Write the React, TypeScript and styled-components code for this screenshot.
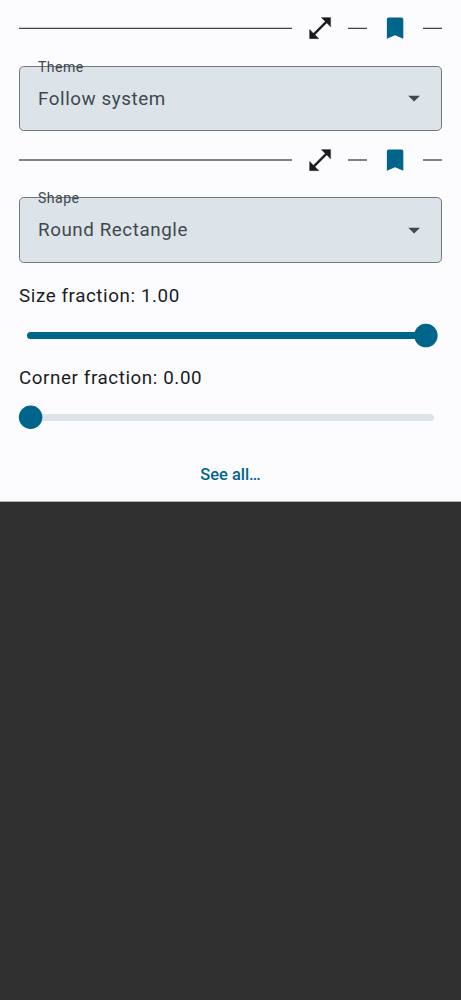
import React from "react";
import styled, { createGlobalStyle } from "styled-components";

const GlobalStyle = createGlobalStyle`
  *, *::before, *::after { box-sizing: border-box; }
  body { margin: 0; background: #303030; font-family: Roboto, sans-serif; }
`;

const Screen = styled.main`
  min-height: 1000px;
  background: #303030;
`;

const Panel = styled.section`
  height: 502px;
  padding: 0 19px;
  background: #fcfcff;
  border-bottom: 1px solid #b0b0b1;
  display: flex;
  flex-direction: column;
`;

const HeaderRow = styled.div<{ $height: number }>`
  display: flex;
  align-items: center;
  height: ${(p) => p.$height}px;
  flex: none;
`;

const Rule = styled.span<{ $width?: number; $even?: boolean }>`
  height: 2px;
  flex: ${(p) => (p.$width ? `0 0 ${p.$width}px` : "1")};
  background: ${(p) =>
    p.$even
      ? "#7e8489"
      : "linear-gradient(#c9ccd0 0 1px, #40484d 1px 2px)"};
`;

const IconButton = styled.button`
  flex: 0 0 56.4px;
  height: 56px;
  padding: 0;
  border: 0;
  background: none;
  display: flex;
  align-items: center;
  justify-content: center;
  color: #191c1e;
`;

const BookmarkButton = styled(IconButton)`
  color: #00658b;
`;

const Glyph = styled.svg`
  width: 28.2px;
  height: 28.2px;
  fill: currentColor;
  display: block;
`;

const Field = styled.div<{ $gap: number; $height: number }>`
  position: relative;
  flex: none;
  height: ${(p) => p.$height}px;
  margin-top: ${(p) => p.$gap}px;
  padding: 0 13px 0 18px;
  display: flex;
  align-items: center;
  justify-content: space-between;
  background: #dce3e9;
  border: 1px solid #71787d;
  border-radius: 4.7px;
  color: #40484d;
`;

const FieldLabel = styled.span`
  position: absolute;
  left: 18px;
  top: -9.5px;
  font-size: 14.08px;
  line-height: 18px;
  letter-spacing: 0.47px;
`;

const FieldValue = styled.span`
  font-size: 18.8px;
  line-height: 28px;
  letter-spacing: 0.57px;
`;

const SliderLabel = styled.div<{ $gap: number }>`
  margin-top: ${(p) => p.$gap}px;
  height: 28px;
  flex: none;
  font-size: 18.8px;
  line-height: 28px;
  letter-spacing: 0.587px;
  color: #191c1e;
`;

const SliderBox = styled.div`
  position: relative;
  flex: none;
  height: 23px;
  margin-top: 14px;
  padding: 0 8px;
  display: flex;
  align-items: center;
`;

const Track = styled.div<{ $active: boolean }>`
  width: 100%;
  height: 7px;
  border-radius: 4px;
  background: ${(p) => (p.$active ? "#00658b" : "#dce3e9")};
`;

const Thumb = styled.svg<{ $end: boolean }>`
  position: absolute;
  top: -1px;
  ${(p) => (p.$end ? "right: 4px;" : "left: -1px;")}
  width: 25px;
  height: 25px;
  fill: #00658b;
`;

const SeeAll = styled.button`
  align-self: center;
  margin-top: 32px;
  padding: 0;
  border: 0;
  background: none;
  font: 500 16.43px/28px Roboto, sans-serif;
  letter-spacing: 0;
  color: #00658b;
`;

function Header({ height, even }: { height: number; even?: boolean }) {
  return (
    <HeaderRow $height={height}>
      <Rule $even={even} />
      <IconButton aria-label="Expand">
        <Glyph viewBox="0 0 24 24" stroke="currentColor" strokeWidth="0.2">
          <path d="M21 11V3h-8l3.29 3.29-10 10L3 13v8h8l-3.29-3.29 10-10z" />
        </Glyph>
      </IconButton>
      <Rule $width={18.7} $even={even} />
      <BookmarkButton aria-label="Bookmark">
        <Glyph viewBox="0 0 24 24">
          <path d="M17.4 3H6.6C5.7 3 5 3.7 5 4.6V21l7-3 7 3V4.6c0-.9-.7-1.6-1.6-1.6z" />
        </Glyph>
      </BookmarkButton>
      <Rule $width={18.7} $even={even} />
    </HeaderRow>
  );
}

interface SelectProps {
  label: string;
  value: string;
  gap: number;
  height: number;
}

function Select({ label, value, gap, height }: SelectProps) {
  return (
    <Field $gap={gap} $height={height}>
      <FieldLabel>{label}</FieldLabel>
      <FieldValue>{value}</FieldValue>
      <Glyph viewBox="0 0 24 24">
        <path d="M7 10l5 5 5-5z" />
      </Glyph>
    </Field>
  );
}

function Slider({ full }: { full: boolean }) {
  return (
    <SliderBox>
      <Track $active={full} />
      <Thumb $end={full} viewBox="0 0 25 25">
        <circle cx={full ? 12.9 : 12.6} cy={full ? 12.6 : 12.2} r="11.75" />
      </Thumb>
    </SliderBox>
  );
}

export default function App() {
  return (
    <>
      <GlobalStyle />
      <Screen>
        <Panel>
          <Header height={56} />
          <Select label="Theme" value="Follow system" gap={10} height={65} />
          <Header height={58} even />
          <Select label="Shape" value="Round Rectangle" gap={8} height={66} />
          <SliderLabel $gap={19}>Size fraction: 1.00</SliderLabel>
          <Slider full />
          <SliderLabel $gap={17}>Corner fraction: 0.00</SliderLabel>
          <Slider full={false} />
          <SeeAll>See all…</SeeAll>
        </Panel>
      </Screen>
    </>
  );
}
